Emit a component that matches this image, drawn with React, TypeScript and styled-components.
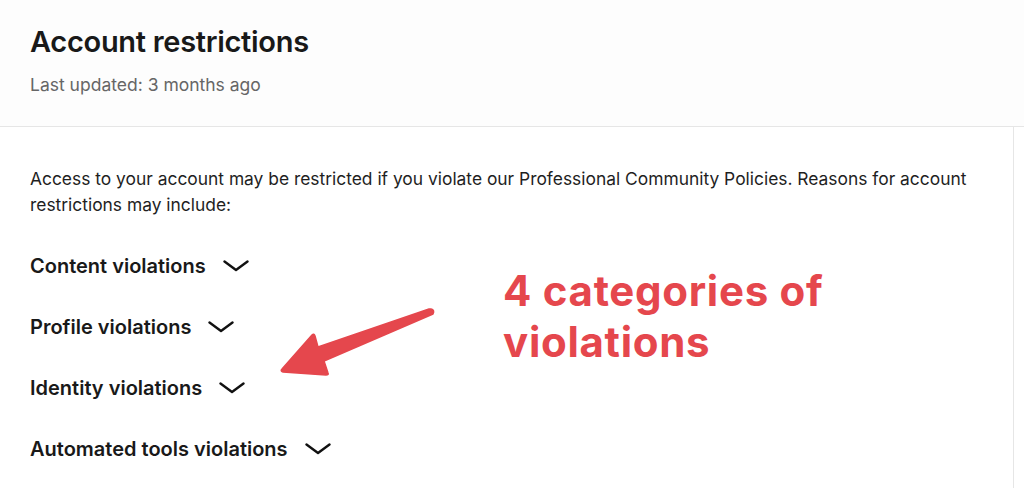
import React from 'react';
import styled, { createGlobalStyle } from 'styled-components';

const GlobalStyle = createGlobalStyle`
  html, body {
    margin: 0;
    padding: 0;
    background: #ffffff;
  }
  body {
    font-family: Inter, 'Liberation Sans', sans-serif;
    color: #1a1a1a;
    overflow: hidden;
  }
`;

const sections = [
  'Content violations',
  'Profile violations',
  'Identity violations',
  'Automated tools violations',
];

function Chevron() {
  return (
    <svg width="26" height="12" viewBox="0 0 26 12" fill="none">
      <path d="M1.5 1.5 L13 10 L24.5 1.5" stroke="#111" strokeWidth="2.4" strokeLinecap="round" strokeLinejoin="round" />
    </svg>
  );
}

function Arrow() {
  return (
    <svg width="160" height="72" viewBox="0 0 160 72">
      <path
        d="M151 2 Q155 3 153 7 L44 54 L48 66 Q49 68 46 68 L3 65 Q0 64 2 62 L32 28 Q34 26 35 29 L38 40 L149 2 Z"
        fill="#e5474d"
        stroke="#e5474d"
        strokeWidth="1.5"
        strokeLinejoin="round"
      />
    </svg>
  );
}

export default function App() {
  return (
    <Root>
      <GlobalStyle />
      <Header>
        <Title>Account restrictions</Title>
        <Updated>Last updated: 3 months ago</Updated>
      </Header>
      <Body>
        <Intro>
          Access to your account may be restricted if you violate our Professional Community Policies. Reasons for account
          restrictions may include:
        </Intro>
        <List>
          {sections.map(s => (
            <Item key={s}>
              <span>{s}</span>
              <Chevron />
            </Item>
          ))}
        </List>
        <Callout>
          <ArrowWrap>
            <Arrow />
          </ArrowWrap>
          <Note>
            4 categories of
            <br />
            violations
          </Note>
        </Callout>
      </Body>
    </Root>
  );
}

const Root = styled.div`
  width: 1024px;
  height: 488px;
  display: flex;
  flex-direction: column;
  background: #fff;
`;
const Header = styled.header`
  height: 127px;
  box-sizing: border-box;
  padding: 25px 30px 0;
  border-bottom: 1px solid #e6e6e6;
  background: #fdfdfd;
`;
const Title = styled.h1`
  margin: 0;
  font-size: 29px;
  line-height: 34px;
  font-weight: 600;
  letter-spacing: -0.3px;
  color: #191919;
`;
const Updated = styled.p`
  margin: 16px 0 0;
  font-size: 17.5px;
  line-height: 20px;
  color: #666;
`;
const Body = styled.main`
  position: relative;
  flex: 1;
  width: 1014px;
  box-sizing: border-box;
  border-right: 1px solid #e6e6e6;
  padding: 39px 30px 0;
`;
const Intro = styled.p`
  margin: 0;
  max-width: 960px;
  font-size: 17.4px;
  line-height: 26px;
  color: #1f1f1f;
`;
const List = styled.div`
  display: flex;
  flex-direction: column;
  gap: 38px;
  margin-top: 36px;
`;
const Item = styled.div`
  display: flex;
  align-items: center;
  gap: 17px;
  height: 23px;
  font-size: 20px;
  font-weight: 600;
  color: #191919;
`;
const Callout = styled.div`
  position: absolute;
  left: 280px;
  top: 138px;
  display: flex;
  align-items: flex-start;
`;
const ArrowWrap = styled.div`
  margin-top: 42px;
  margin-right: 63px;
`;
const Note = styled.div`
  font-weight: 700;
  font-size: 42px;
  line-height: 51px;
  letter-spacing: 0.7px;
  color: #e5474d;
`;
